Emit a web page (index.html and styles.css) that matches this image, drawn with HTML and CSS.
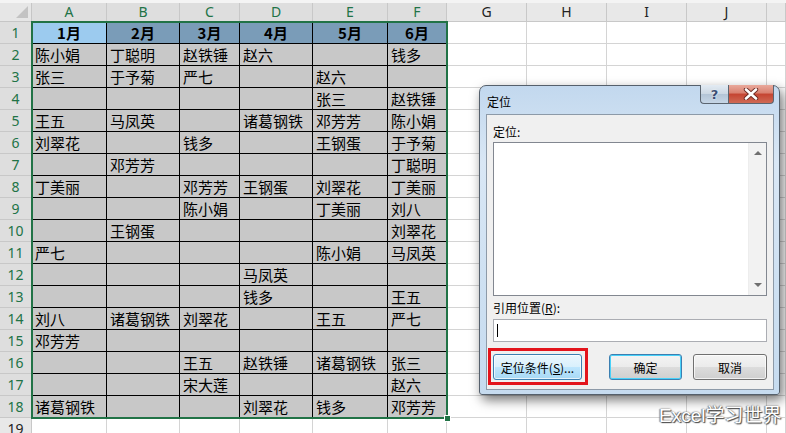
FILE: index.html
```html
<!DOCTYPE html>
<html lang="zh-CN">
  <head>
    <meta charset="UTF-8" />
    <title>定位</title>
    <link rel="stylesheet" href="styles.css">
  </head>
  <body>
    <div class="topstrip"></div>
    <div class="sheet" id="sheet"></div>
    <div class="selection"><span class="handle"></span></div>

    <div class="dialog">
      <div class="titlebar">
        <span class="title">定位</span>
        <div class="caption-btns">
          <span class="cbtn help">?</span>
          <span class="cbtn close">
            <svg width="16" height="12" viewBox="0 0 16 12">
              <path d="M3 1.5 L13 10.5 M13 1.5 L3 10.5" stroke="#6b2a22" stroke-width="4.4" stroke-linecap="round"/>
              <path d="M3 1.5 L13 10.5 M13 1.5 L3 10.5" stroke="#fff" stroke-width="2.6" stroke-linecap="round"/>
            </svg>
          </span>
        </div>
      </div>
      <div class="panel">
        <div class="label">定位:</div>
        <div class="listbox">
          <div class="vscroll">
            <span class="arr up"></span>
            <span class="arr down"></span>
          </div>
        </div>
        <div class="label ref-label">引用位置(<u>R</u>):</div>
        <div class="refbox"><span class="caret"></span></div>
        <div class="btnrow">
          <span class="mark">
            <button class="btn special">定位条件(<u>S</u>)...</button>
          </span>
          <button class="btn default">确定</button>
          <button class="btn">取消</button>
        </div>
      </div>
    </div>

    <div class="watermark">Excel学习世界</div>

    <script>
      // 表格数据：第1行是月份标题
      const data = [
        ['1月', '2月', '3月', '4月', '5月', '6月'],
        ['陈小娟', '丁聪明', '赵铁锤', '赵六', '', '钱多'],
        ['张三', '于予菊', '严七', '', '赵六', ''],
        ['', '', '', '', '张三', '赵铁锤'],
        ['王五', '马凤英', '', '诸葛钢铁', '邓芳芳', '陈小娟'],
        ['刘翠花', '', '钱多', '', '王钢蛋', '于予菊'],
        ['', '邓芳芳', '', '', '', '丁聪明'],
        ['丁美丽', '', '邓芳芳', '王钢蛋', '刘翠花', '丁美丽'],
        ['', '', '陈小娟', '', '丁美丽', '刘八'],
        ['', '王钢蛋', '', '', '', '刘翠花'],
        ['严七', '', '', '', '陈小娟', '马凤英'],
        ['', '', '', '马凤英', '', ''],
        ['', '', '', '钱多', '', '王五'],
        ['刘八', '诸葛钢铁', '刘翠花', '', '王五', '严七'],
        ['邓芳芳', '', '', '', '', ''],
        ['', '', '王五', '赵铁锤', '诸葛钢铁', '张三'],
        ['', '', '宋大莲', '', '', '赵六'],
        ['诸葛钢铁', '', '', '刘翠花', '钱多', '邓芳芳']
      ];
      const letters = ['A', 'B', 'C', 'D', 'E', 'F', 'G', 'H', 'I', 'J', ''];
      const sheet = document.getElementById('sheet');

      function addCell(cls, text) {
        const el = document.createElement('div');
        el.className = cls;
        el.textContent = text;
        sheet.appendChild(el);
      }

      addCell('corner', '');
      letters.forEach((l, i) => addCell(i < 6 ? 'hd sel' : 'hd', l));

      for (let r = 0; r < 19; r++) {
        const inData = r < data.length;
        addCell(inData ? 'rh sel' : 'rh', String(r + 1));
        for (let c = 0; c < letters.length; c++) {
          if (inData && c < 6) {
            let cls = r === 0 ? 'c t' : 'c g';
            if (r === 0 && c === 0) cls += ' act';
            addCell(cls, data[r][c]);
          } else {
            addCell('c', '');
          }
        }
      }
    </script>
  </body>
</html>
```

FILE: styles.css
```css
body {
  margin: 0;
  width: 786px;
  height: 433px;
  overflow: hidden;
  position: relative;
  background: #fff;
  font-family: "Noto Sans CJK SC", sans-serif;
}
.topstrip {
  height: 3px;
  background: #f4f4f4;
}
.sheet {
  display: grid;
  grid-template-columns: 32px 75px 73px 60px 73px 75px 59px 80px 80px 80px 80px 19px;
  grid-template-rows: 19px;
  grid-auto-rows: 22px;
}
.sheet > div {
  box-sizing: border-box;
  border-right: 1px solid #d4d4d4;
  border-bottom: 1px solid #d4d4d4;
  overflow: hidden;
  white-space: nowrap;
}
.corner {
  position: relative;
  background: #e6e6e6;
  border-color: #c6c6c6 !important;
}
.corner::after {
  content: '';
  position: absolute;
  right: 3px;
  bottom: 3px;
  border-left: 12px solid transparent;
  border-bottom: 12px solid #c3c3c3;
}
.hd, .rh {
  background: #e8e8e8;
  border-color: #c8c8c8 !important;
  font-family: "Noto Sans", sans-serif;
  font-size: 14px;
  color: #222;
  text-align: center;
}
.hd {
  line-height: 18px;
}
.rh {
  line-height: 22px;
}
.hd.sel, .rh.sel {
  background: #dedede;
  color: #217346;
}
.c {
  font-size: 15px;
  line-height: 22px;
  padding: 0 3px;
  color: #000;
}
.c.g, .c.t {
  border-color: #000 !important;
}
.c.g {
  background: #c8c8c8;
}
.c.t {
  background: #7a9cb8;
  font-weight: bold;
  text-align: center;
}
.c.t.act {
  background: #9ccbef;
}
.selection {
  position: absolute;
  left: 31px;
  top: 21px;
  width: 417px;
  height: 398px;
  box-sizing: border-box;
  border: 2px solid #217346;
}
.handle {
  position: absolute;
  right: -5px;
  bottom: -5px;
  width: 5px;
  height: 5px;
  background: #217346;
  border: 1px solid #fff;
}

/* 定位 对话框 */
.dialog {
  position: absolute;
  left: 479px;
  top: 85px;
  width: 301px;
  height: 310px;
  box-sizing: border-box;
  border: 1px solid #55606c;
  border-radius: 7px 7px 3px 3px;
  background: linear-gradient(180deg, #c2d8ee 0%, #d9e7f5 25%, #cfe1f2 60%, #c6dbef 100%);
  box-shadow: 3px 5px 12px rgba(0, 0, 0, 0.55);
  padding: 0 5px 4px 6px;
  display: flex;
  flex-direction: column;
}
.titlebar {
  height: 28px;
  display: flex;
  align-items: center;
}
.title {
  font-size: 12px;
  padding-left: 1px;
  padding-top: 2px;
}
.caption-btns {
  margin-left: auto;
  align-self: flex-start;
  margin-top: -1px;
  display: flex;
}
.cbtn {
  height: 19px;
  box-sizing: border-box;
  border: 1px solid #5b6570;
  border-top: none;
  display: flex;
  align-items: center;
  justify-content: center;
}
.help {
  width: 28px;
  border-radius: 0 0 0 4px;
  border-right: none;
  background: linear-gradient(180deg, #e3ebf3 0%, #cbd7e3 50%, #b3c4d6 51%, #c6d6e6 100%);
  font-family: "DejaVu Sans", sans-serif;
  font-size: 13px;
  font-weight: bold;
  color: #3c4e74;
  text-shadow: 0 0 2px #fff;
}
.close {
  width: 46px;
  border-radius: 0 0 4px 0;
  background: linear-gradient(180deg, #e9a99c 0%, #d9806f 45%, #c54431 50%, #cf6a55 100%);
}
.panel {
  flex: 1;
  background: #f0f0f0;
  border: 1px solid #8d9aa8;
  padding: 9px 6px 0 6px;
  display: flex;
  flex-direction: column;
}
.label {
  font-size: 12px;
  line-height: 16px;
  height: 16px;
  margin-bottom: 2px;
}
.listbox {
  height: 154px;
  box-sizing: border-box;
  border: 1px solid #828790;
  background: #fff;
  display: flex;
  justify-content: flex-end;
}
.vscroll {
  width: 17px;
  background: #f2f2f2;
  border-left: 1px solid #ededed;
  position: relative;
}
.arr {
  position: absolute;
  left: 5px;
  border-left: 4px solid transparent;
  border-right: 4px solid transparent;
}
.arr.up {
  top: 8px;
  border-bottom: 4px solid #6f6f6f;
}
.arr.down {
  bottom: 8px;
  border-top: 4px solid #6f6f6f;
}
.ref-label {
  margin-top: 4px;
  margin-bottom: 3px;
}
.refbox {
  height: 23px;
  box-sizing: border-box;
  border: 1px solid #abadb3;
  background: #fff;
  padding: 4px 3px;
}
.caret {
  display: block;
  width: 1px;
  height: 13px;
  background: #000;
}
.btnrow {
  margin-top: 12px;
  display: flex;
  gap: 11px;
}
.mark {
  display: flex;
  border: 3px solid #e3141c;
  padding: 3px 3px 2px 2px;
  margin: -6px 10px -5px -5px;
}
.btn {
  height: 26px;
  width: 74px;
  box-sizing: border-box;
  border: 1px solid #707070;
  border-radius: 3px;
  background: linear-gradient(180deg, #f4f4f4 0%, #ebebeb 50%, #dcdcdc 51%, #cfcfcf 100%);
  font-family: "Noto Sans CJK SC", sans-serif;
  font-size: 12px;
  color: #000;
  padding: 0;
  box-shadow: inset 0 0 0 1px rgba(255, 255, 255, 0.7);
}
.btn.special {
  width: 89px;
  border-color: #3c7fb1;
  background: linear-gradient(180deg, #eaf6fd 0%, #d9f0fc 50%, #bee6fd 51%, #a7d9f5 100%);
}
.btn.default {
  width: 73px;
  border-color: #3c7fb1;
  box-shadow: inset 0 0 0 1px #48d1f9;
}
.watermark {
  position: absolute;
  left: 659px;
  top: 400px;
  font-family: "Liberation Sans", "Noto Sans CJK SC", sans-serif;
  font-size: 19px;
  color: #fff;
  text-shadow: 1px 1px 1px #444, 0 0 2px #666, -1px 0 1px #888;
  white-space: nowrap;
}
```
